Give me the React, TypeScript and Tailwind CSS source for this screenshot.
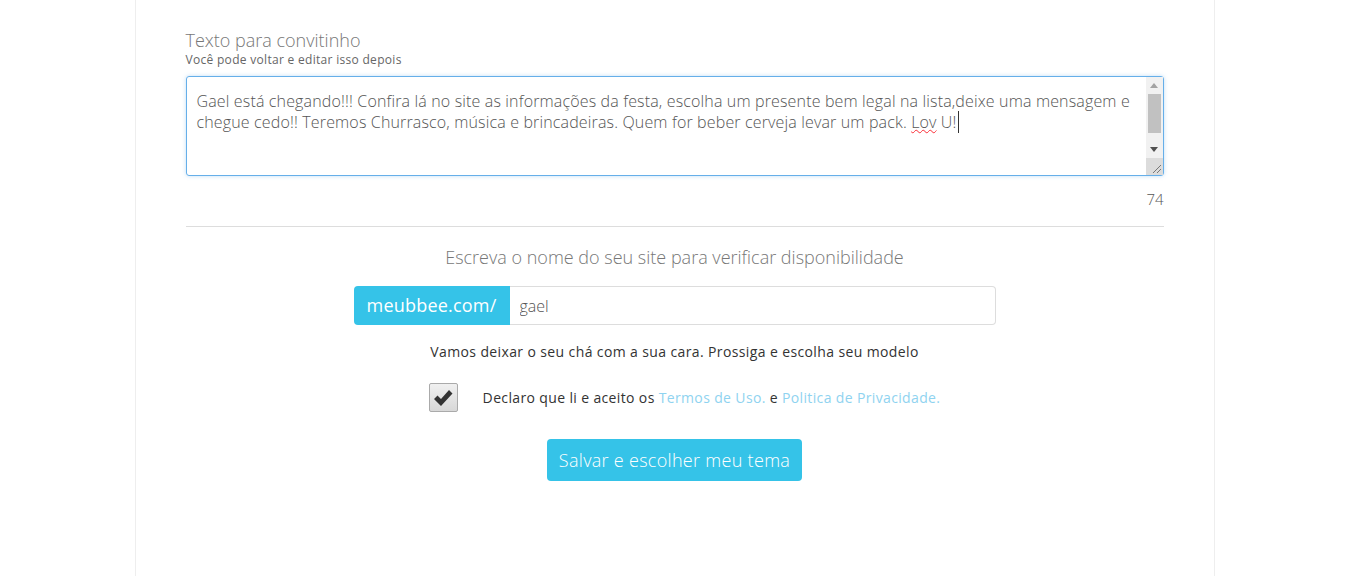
import { useState } from "react"

export default function App() {
  const [checked, setChecked] = useState(true)
  const [slug, setSlug] = useState("gael")

  return (
    <div className="min-h-[576px] bg-white font-['Open_Sans',sans-serif] text-[#555]">
      <div className="mx-auto min-h-[576px] w-[1080px] border-x border-[#eee] px-[50px]">
        {/* Convite */}
        <div className="pt-[29px]">
          <h3 className="text-[18px] leading-[22px] font-light text-[#777]">Texto para convitinho</h3>
          <p className="text-[12px] leading-[18px] tracking-[0.3px] text-[#666]">Você pode voltar e editar isso depois</p>
        </div>

        <div className="mt-[7px] flex h-[100px] rounded-[3px] border border-[#66afe9] shadow-[0_0_4px_rgba(102,175,233,0.4)]">
          <div className="flex-1 px-[10px] py-[14px] text-[16px] leading-[21px] tracking-[0.15px] font-light text-[#555]">
            Gael está chegando!!! Confira lá no site as informações da festa, escolha um presente bem legal na
            lista,deixe uma mensagem e chegue cedo!! Teremos Churrasco, música e brincadeiras. Quem for beber cerveja
            levar um pack.{" "}
            <span className="border-r border-[#333] pr-px">
              <span className="underline decoration-wavy decoration-red-500 decoration-1">Lov</span> U!
            </span>
          </div>
          {/* scrollbar */}
          <div className="flex w-[17px] flex-col bg-[#f1f1f1]">
            <div className="flex h-[17px] items-center justify-center">
              <svg width="8" height="5" viewBox="0 0 8 5">
                <path d="M0 5 L4 0 L8 5 Z" fill="#a3a3a3" />
              </svg>
            </div>
            <div className="mx-[2px] h-[39px] bg-[#c1c1c1]" />
            <div className="flex-1" />
            <div className="flex h-[17px] items-center justify-center">
              <svg width="8" height="5" viewBox="0 0 8 5">
                <path d="M0 0 L4 5 L8 0 Z" fill="#505050" />
              </svg>
            </div>
            <div className="flex h-[17px] items-end justify-end bg-[#dcdcdc] p-[2px]">
              <svg width="9" height="9" viewBox="0 0 9 9">
                <path d="M1 9 L9 1 M5 9 L9 5" stroke="#777" strokeWidth="1" />
              </svg>
            </div>
          </div>
        </div>

        <div className="mt-[13px] text-right text-[15px] leading-[20px] font-light text-[#555]">74</div>

        <hr className="mt-[17px] border-t border-[#ddd]" />

        {/* Nome do site */}
        <div className="mt-[18px] text-center text-[18px] leading-[24px] font-light text-[#777]">
          Escreva o nome do seu site para verificar disponibilidade
        </div>

        <div className="mx-auto mt-[17px] flex h-[39px] w-[642px]">
          <span className="flex w-[156px] items-center justify-center rounded-l-[4px] bg-[#35c3e8] text-[18px] tracking-[0.2px] text-white">
            meubbee.com/
          </span>
          <input
            value={slug}
            onChange={(e) => setSlug(e.target.value)}
            className="flex-1 rounded-r-[4px] border border-l-0 border-[#ddd] px-[10px] text-[16px] font-light text-[#555] outline-none"
          />
        </div>

        <p className="mt-[17px] text-center text-[14px] leading-[20px] tracking-[0.38px] text-[#333]">
          Vamos deixar o seu chá com a sua cara. Prossiga e escolha seu modelo
        </p>

        <div className="mt-[21px] flex items-center justify-center gap-[25px] pl-[20px]">
          <button
            onClick={() => setChecked(!checked)}
            className="flex h-[29px] w-[29px] items-center justify-center rounded-[2px] border border-[#aaa] bg-gradient-to-b from-[#f0f0f0] to-[#d8d8d8]"
          >
            {checked && (
              <svg width="22" height="20" viewBox="0 0 22 20">
                <path d="M2 11 L5.5 7.5 L9 11 L17 2 L20.5 5.5 L9 18 Z" fill="#333" />
              </svg>
            )}
          </button>
          <span className="text-[14px] tracking-[0.36px] text-[#333]">
            Declaro que li e aceito os <a className="text-[#8fd3f0]">Termos de Uso.</a> e{" "}
            <a className="text-[#8fd3f0]">Politica de Privacidade.</a>
          </span>
        </div>

        <div className="mt-[27px] flex justify-center">
          <button className="h-[42px] w-[255px] rounded-[4px] bg-[#35c3e8] text-[18px] tracking-[0.3px] font-light text-white">
            Salvar e escolher meu tema
          </button>
        </div>
      </div>
    </div>
  )
}
